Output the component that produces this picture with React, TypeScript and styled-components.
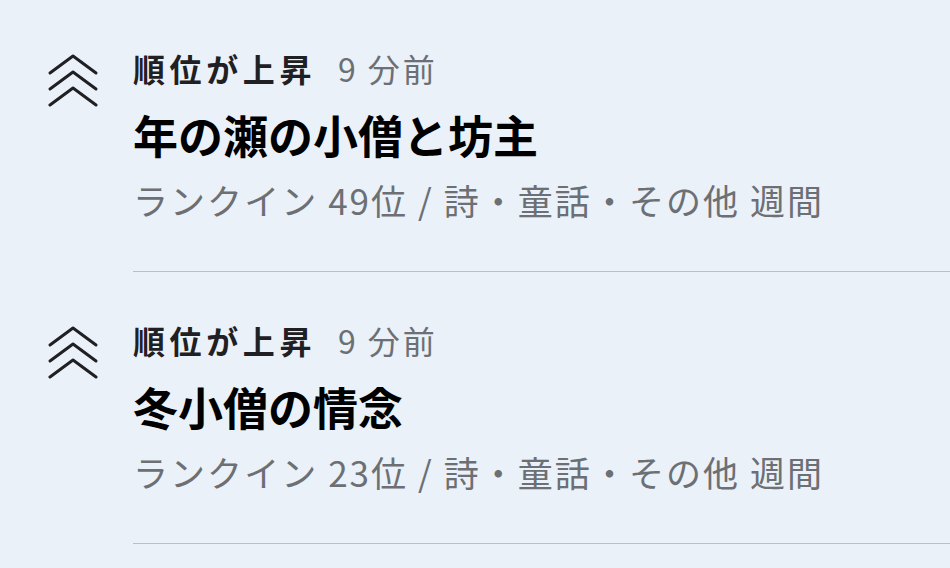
import React from 'react';
import styled, { createGlobalStyle } from 'styled-components';

interface RankEvent {
  id: number;
  label: string;
  minutes: number;
  title: string;
  rank: number;
  genre: string;
  period: string;
}

const events: RankEvent[] = [
  { id: 1, label: '順位が上昇', minutes: 9, title: '年の瀬の小僧と坊主', rank: 49, genre: '詩・童話・その他', period: '週間' },
  { id: 2, label: '順位が上昇', minutes: 9, title: '冬小僧の情念', rank: 23, genre: '詩・童話・その他', period: '週間' },
];

const GlobalStyle = createGlobalStyle`
  html, body {
    margin: 0;
    padding: 0;
    background: #eaf1f8;
  }
  body {
    font-family: "Noto Sans CJK JP", "Noto Sans", sans-serif;
  }
`;

const RiseIcon: React.FC = () => (
  <svg width="52" height="54" viewBox="0 0 52 54" fill="none">
    {[0, 16, 32].map(dy => (
      <polyline
        key={dy}
        points={`3,${20 + dy} 26,${3 + dy} 49,${20 + dy}`}
        stroke="#1f2023"
        strokeWidth="3"
        strokeLinecap="round"
        strokeLinejoin="round"
      />
    ))}
  </svg>
);

const App: React.FC = () => {
  return (
    <>
      <GlobalStyle />
      <List>
        {events.map(ev => (
          <Row key={ev.id}>
            <IconCol>
              <RiseIcon />
            </IconCol>
            <Content>
              <Header>
                <Label>{ev.label}</Label>
                <Ago>
                  <AgoNum>{ev.minutes}</AgoNum>分前
                </Ago>
              </Header>
              <Title>{ev.title}</Title>
              <Meta>{`ランクイン ${ev.rank}位 / ${ev.genre} ${ev.period}`}</Meta>
            </Content>
          </Row>
        ))}
      </List>
    </>
  );
};

export default App;

const List = styled.div`
  display: flex;
  flex-direction: column;
  width: 950px;
  overflow: hidden;
`;

const Row = styled.div`
  display: flex;
  align-items: flex-start;
`;

const IconCol = styled.div`
  flex: 0 0 133px;
  padding: 53px 0 0 47px;
  box-sizing: border-box;
`;

const Content = styled.div`
  flex: 1;
  display: flex;
  flex-direction: column;
  padding: 49px 0 50px;
  border-bottom: 1px solid #b9c0c8;
`;

const Header = styled.div`
  display: flex;
  align-items: baseline;
  gap: 22px;
  height: 38px;
  line-height: 38px;
  font-size: 32px;
`;

const Label = styled.span`
  font-weight: 700;
  color: #1f2023;
  letter-spacing: 4.6px;
`;

const Ago = styled.span`
  font-weight: 400;
  color: #6c6f74;
  letter-spacing: 3px;
`;

const AgoNum = styled.span`
  margin-right: 9px;
`;

const Title = styled.div`
  margin-top: 22px;
  font-size: 45px;
  line-height: 52px;
  font-weight: 700;
  color: #000;
`;

const Meta = styled.div`
  margin-top: 18px;
  font-size: 35px;
  line-height: 42px;
  color: #6c6f74;
  letter-spacing: 2.05px;
  white-space: nowrap;
`;
